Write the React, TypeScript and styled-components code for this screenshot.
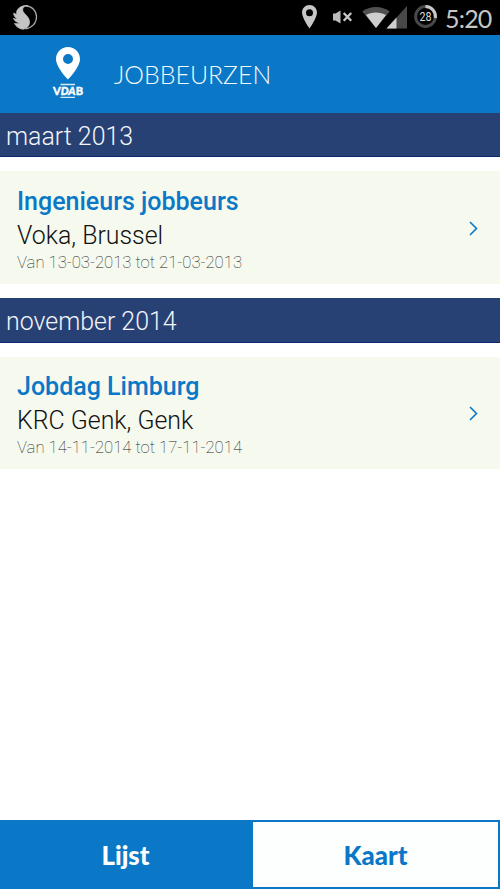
import React from 'react';
import styled, { createGlobalStyle } from 'styled-components';

const blue = '#0a78c6';

const GlobalStyle = createGlobalStyle`
  * { box-sizing: border-box; }
  html, body { margin: 0; padding: 0; background: #fff; }
`;

const Screen = styled.div`
  width: 500px;
  height: 889px;
  display: flex;
  flex-direction: column;
  overflow: hidden;
  background: #fff;
  font-family: Roboto, sans-serif;
`;

const StatusBar = styled.div`
  flex: none;
  height: 35px;
  display: flex;
  align-items: flex-start;
  background: #000;
`;

const Notification = styled.svg`
  width: 26px;
  height: 26px;
  margin: 4px 0 0 12px;
`;

const Indicators = styled.svg`
  width: 140px;
  height: 35px;
  margin-left: auto;
`;

const Clock = styled.time`
  width: 60px;
  padding-left: 5px;
  line-height: 36px;
  font-size: 25px;
  font-weight: 400;
  letter-spacing: -0.8px;
  color: #c6c6c6;
  font-family: Lato, sans-serif;
`;

const Header = styled.header`
  flex: none;
  height: 77.7px;
  display: flex;
  align-items: flex-start;
  background: ${blue};
`;

const Logo = styled.svg`
  width: 34px;
  height: 54px;
  margin: 11px 29px 0 51px;
`;

const Title = styled.h1`
  margin: 22px 0 0;
  font: 300 24.9px/34px Lato, sans-serif;
  color: #f2f8ff;
`;

const List = styled.main`
  flex: 1;
`;

const Month = styled.h2`
  height: 44.6px;
  margin: 0 0 14.15px;
  padding-left: 6px;
  background: #284175;
  border-bottom: 1px solid #0b276f;
  color: #f3f5fa;
  font-size: 24.9px;
  font-weight: 300;
  line-height: 47px;
`;

const Card = styled.article`
  height: 112.4px;
  margin-bottom: 14.15px;
  padding: 0 21px 0 17px;
  display: flex;
  justify-content: space-between;
  align-items: center;
  background: #f5f9ee;
`;

const Details = styled.div`
  align-self: flex-start;
  padding-top: 13.4px;
`;

const Name = styled.h3`
  margin: 0;
  font-size: 25px;
  font-weight: 500;
  line-height: 34px;
  color: ${blue};
`;

const Place = styled.p`
  margin: 0;
  font-size: 24.9px;
  font-weight: 300;
  line-height: 33px;
  color: #111;
`;

const Period = styled.p`
  margin: 0;
  font-size: 16.7px;
  font-weight: 100;
  line-height: 21px;
  color: #222;
`;

const Chevron = styled.svg`
  width: 10px;
  height: 16px;
`;

const Tabs = styled.nav`
  flex: none;
  height: 69px;
  display: grid;
  grid-template-columns: 252px 248px;
`;

const Tab = styled.button<{ $active?: boolean }>`
  border: 2px solid ${blue};
  border-left-width: 1px;
  padding: 0;
  background: ${({ $active }) => ($active ? blue : '#fdfefe')};
  color: ${({ $active }) => ($active ? '#fff' : blue)};
  font: 900 25.8px/30px Lato, sans-serif;
`;

const groups = [
  { month: 'maart 2013', name: 'Ingenieurs jobbeurs', place: 'Voka, Brussel', period: 'Van 13-03-2013 tot 21-03-2013' },
  { month: 'november 2014', name: 'Jobdag Limburg', place: 'KRC Genk, Genk', period: 'Van 14-11-2014 tot 17-11-2014' },
];

export default function App() {
  return (
    <Screen>
      <GlobalStyle />
      <StatusBar>
        <Notification viewBox="0 0 26 26">
          <path d="M14 1.800C20 2 24.500 7 24.500 13c0 6-4.500 11.300-11 11.800" fill="none" stroke="#aaa" strokeWidth="1.200" />
          <path d="M15.800 1.800C10.500 2 9.500 6 12 9c2.500 2.800 5.500 5 5.500 9 0 4-3 7-7 7.200C7 24.500 4 22.500 2.500 19.500c2 .4 4 .2 5.500-.6-3-.4-5.500-1.900-6.500-4.400 1.300.5 2.600.5 3.800.2C3 13.500 1.500 11.500 1.800 9c1 .8 2 1.200 3 1.300C4 7.500 5.500 5 8 3.300c2.500-1.500 5-2 7.800-1.500Z" fill="#c4c4c4" stroke="#c4c4c4" strokeWidth=".8" strokeLinejoin="round" />
        </Notification>
        <Indicators viewBox="300 0 140 35">
          <path fillRule="evenodd" d="M309.500 5c-4.200 0-7.500 3.300-7.500 7.500 0 5.500 7.500 16 7.500 16s7.500-10.500 7.500-16c0-4.200-3.300-7.500-7.500-7.500Zm0 4.200a3.500 3.500 0 1 1 0 7 3.500 3.500 0 0 1 0-7Z" fill="#c6c6c6" />
          <path d="M333 13.500h2.500l5-3v13l-5-3H333Z" fill="#bcbcbc" />
          <path d="m343.700 13 7.500 7.800m0-7.800-7.500 7.800" stroke="#c6c6c6" strokeWidth="2.300" />
          <path d="M362.300 11.500c7-6 20-6 27.400 0L376 28Z" fill="#505050" />
          <path d="M366 15c5-3.500 14.500-3.500 20 0l-10 13Z" fill="#cecece" />
          <path d="M386.500 28.500 407 6v22.500Z" fill="#484848" />
          <path d="M386.500 28.500 396.500 17.500v11Z" fill="#cecece" />
          <circle cx="425.500" cy="16.500" r="9.900" fill="none" stroke="#484848" strokeWidth="3" />
          <path d="M425.500 6.600a9.900 9.900 0 0 1 9.800 11.500" fill="none" stroke="#c8c8c8" strokeWidth="3" />
          <text x="425.500" y="21" textAnchor="middle" textLength="12" lengthAdjust="spacingAndGlyphs" fontFamily="Roboto, sans-serif" fontSize="12.500" fill="#ddd">28</text>
        </Indicators>
        <Clock>5:20</Clock>
      </StatusBar>
      <Header>
        <Logo viewBox="51 46 34 54">
          <path fillRule="evenodd" d="M68 47c-6.600 0-12 5.300-12 12 0 8.500 12 20.500 12 20.500S80 67.500 80 59c0-6.700-5.400-12-12-12Zm0 7a5 5 0 1 1 0 10 5 5 0 0 1 0-10Z" fill="#fff" />
          <path d="M60.500 84.500H75M60.500 97.300H75" stroke="#d7eaf8" strokeWidth="1.300" />
          <text x="53" y="95" textLength="30" lengthAdjust="spacingAndGlyphs" fontFamily="Lato, sans-serif" fontSize="11" fontWeight="900" fill="#fff" stroke="#fff" strokeWidth=".35">
            V<tspan fontStyle="italic">DA</tspan>B
          </text>
        </Logo>
        <Title>JOBBEURZEN</Title>
      </Header>
      <List>
        {groups.map((group) => (
          <section key={group.month}>
            <Month>{group.month}</Month>
            <Card>
              <Details>
                <Name>{group.name}</Name>
                <Place>{group.place}</Place>
                <Period>{group.period}</Period>
              </Details>
              <Chevron viewBox="0 0 10 16">
                <path d="m1 2 6.500 6.500L1 15" fill="none" stroke={blue} strokeWidth="1.600" />
              </Chevron>
            </Card>
          </section>
        ))}
      </List>
      <Tabs>
        <Tab $active>Lijst</Tab>
        <Tab>Kaart</Tab>
      </Tabs>
    </Screen>
  );
}
